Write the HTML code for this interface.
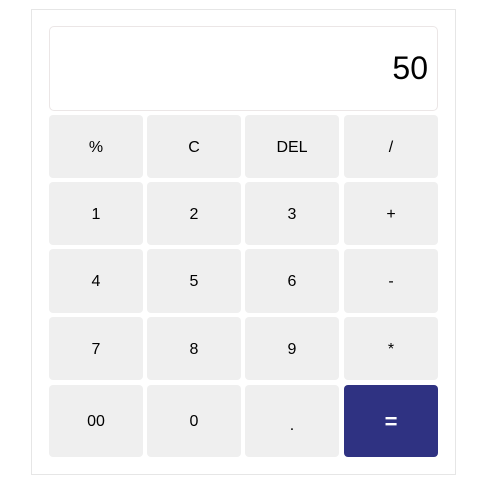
<!DOCTYPE html><html><head><style>
body{margin:0;background:#fff;font-family:"Liberation Sans",Arial,sans-serif;}
.c{position:absolute;left:31px;top:9px;width:425px;height:466px;border:1px solid #e6e6e6;box-sizing:border-box}
.d{position:absolute;left:49px;top:26px;width:389px;height:85px;border:1px solid #ebe6e6;border-radius:5px;box-sizing:border-box;text-align:right;font-size:32px;line-height:83px;padding-right:9px}
.b{position:absolute;width:94px;background:#efefef;border-radius:4px;display:flex;align-items:center;justify-content:center;font-size:16px;color:#000;padding-top:2px;box-sizing:border-box}
.e{background:#2f3282;color:#fff;font-size:22px;font-weight:bold}
</style></head><body>
<div class="c"></div>
<div class="d">50</div>
<div class="b" style="left:49px;top:115px;height:63px">%</div>
<div class="b" style="left:147px;top:115px;height:63px">C</div>
<div class="b" style="left:245px;top:115px;height:63px">DEL</div>
<div class="b" style="left:344px;top:115px;height:63px">/</div>
<div class="b" style="left:49px;top:182px;height:63px">1</div>
<div class="b" style="left:147px;top:182px;height:63px">2</div>
<div class="b" style="left:245px;top:182px;height:63px">3</div>
<div class="b" style="left:344px;top:182px;height:63px">+</div>
<div class="b" style="left:49px;top:249px;height:64px">4</div>
<div class="b" style="left:147px;top:249px;height:64px">5</div>
<div class="b" style="left:245px;top:249px;height:64px">6</div>
<div class="b" style="left:344px;top:249px;height:64px">-</div>
<div class="b" style="left:49px;top:317px;height:63px">7</div>
<div class="b" style="left:147px;top:317px;height:63px">8</div>
<div class="b" style="left:245px;top:317px;height:63px">9</div>
<div class="b" style="left:344px;top:317px;height:63px">*</div>
<div class="b" style="left:49px;top:385px;height:72px">00</div>
<div class="b" style="left:147px;top:385px;height:72px">0</div>
<div class="b" style="left:245px;top:385px;height:72px;padding-top:10px">.</div>
<div class="b e" style="left:344px;top:385px;height:72px">=</div>
</body></html>
